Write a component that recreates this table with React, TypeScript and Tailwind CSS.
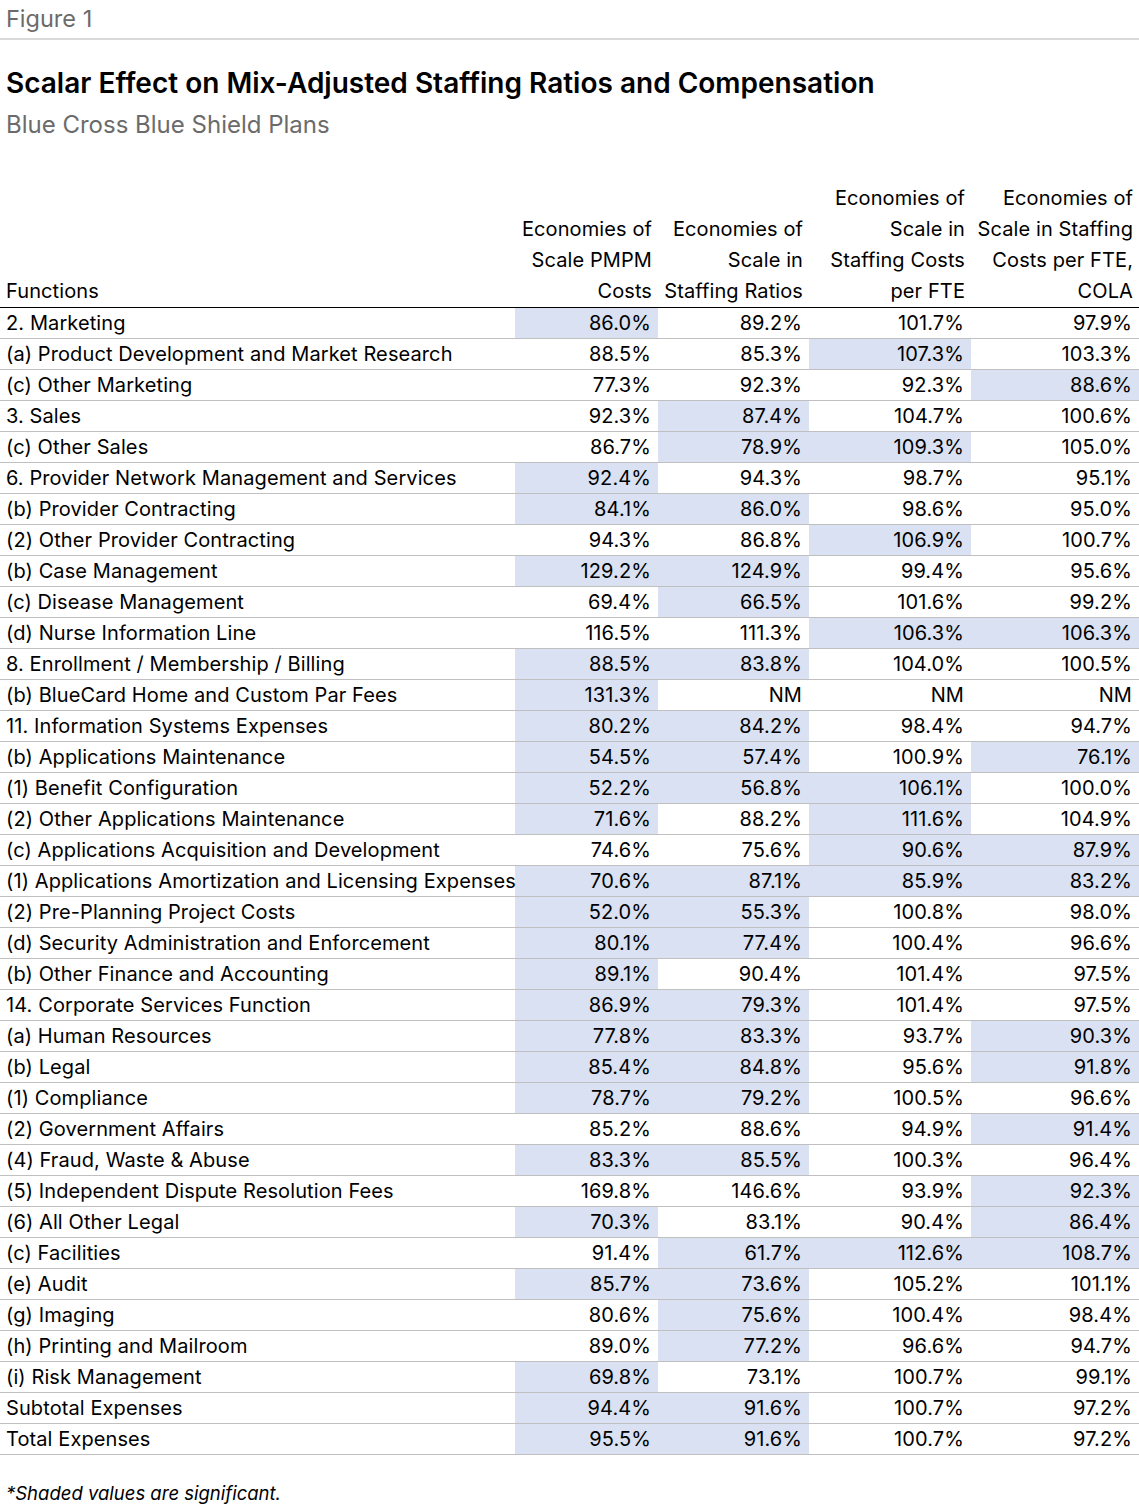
import React from 'react';

type Row = { label: string; values: string[]; shaded: boolean[] };

const r = (label: string, values: string[], shaded: number[]): Row => ({
  label,
  values,
  shaded: [0, 1, 2, 3].map((i) => shaded.includes(i)),
});

const rows: Row[] = [
  r('2. Marketing', ['86.0%', '89.2%', '101.7%', '97.9%'], [0]),
  r('(a) Product Development and Market Research', ['88.5%', '85.3%', '107.3%', '103.3%'], [2]),
  r('(c) Other Marketing', ['77.3%', '92.3%', '92.3%', '88.6%'], [3]),
  r('3. Sales', ['92.3%', '87.4%', '104.7%', '100.6%'], [1]),
  r('(c) Other Sales', ['86.7%', '78.9%', '109.3%', '105.0%'], [1, 2]),
  r('6. Provider Network Management and Services', ['92.4%', '94.3%', '98.7%', '95.1%'], [0]),
  r('(b) Provider Contracting', ['84.1%', '86.0%', '98.6%', '95.0%'], [0, 1]),
  r('(2) Other Provider Contracting', ['94.3%', '86.8%', '106.9%', '100.7%'], [2]),
  r('(b) Case Management', ['129.2%', '124.9%', '99.4%', '95.6%'], [0, 1]),
  r('(c) Disease Management', ['69.4%', '66.5%', '101.6%', '99.2%'], [1]),
  r('(d) Nurse Information Line', ['116.5%', '111.3%', '106.3%', '106.3%'], [2, 3]),
  r('8. Enrollment / Membership / Billing', ['88.5%', '83.8%', '104.0%', '100.5%'], [0, 1]),
  r('(b) BlueCard Home and Custom Par Fees', ['131.3%', 'NM', 'NM', 'NM'], [0]),
  r('11. Information Systems Expenses', ['80.2%', '84.2%', '98.4%', '94.7%'], [0, 1]),
  r('(b) Applications Maintenance', ['54.5%', '57.4%', '100.9%', '76.1%'], [0, 1, 3]),
  r('(1) Benefit Configuration', ['52.2%', '56.8%', '106.1%', '100.0%'], [0, 1, 2]),
  r('(2) Other Applications Maintenance', ['71.6%', '88.2%', '111.6%', '104.9%'], [0, 2]),
  r('(c) Applications Acquisition and Development', ['74.6%', '75.6%', '90.6%', '87.9%'], [2, 3]),
  r('(1) Applications Amortization and Licensing Expenses', ['70.6%', '87.1%', '85.9%', '83.2%'], [0, 1, 2, 3]),
  r('(2) Pre-Planning Project Costs', ['52.0%', '55.3%', '100.8%', '98.0%'], [0, 1]),
  r('(d) Security Administration and Enforcement', ['80.1%', '77.4%', '100.4%', '96.6%'], [0, 1]),
  r('(b) Other Finance and Accounting', ['89.1%', '90.4%', '101.4%', '97.5%'], [0]),
  r('14. Corporate Services Function', ['86.9%', '79.3%', '101.4%', '97.5%'], [0, 1]),
  r('(a) Human Resources', ['77.8%', '83.3%', '93.7%', '90.3%'], [0, 1, 3]),
  r('(b) Legal', ['85.4%', '84.8%', '95.6%', '91.8%'], [0, 1, 3]),
  r('(1) Compliance', ['78.7%', '79.2%', '100.5%', '96.6%'], [0, 1]),
  r('(2) Government Affairs', ['85.2%', '88.6%', '94.9%', '91.4%'], [3]),
  r('(4) Fraud, Waste & Abuse', ['83.3%', '85.5%', '100.3%', '96.4%'], [0, 1]),
  r('(5) Independent Dispute Resolution Fees', ['169.8%', '146.6%', '93.9%', '92.3%'], [3]),
  r('(6) All Other Legal', ['70.3%', '83.1%', '90.4%', '86.4%'], [0, 3]),
  r('(c) Facilities', ['91.4%', '61.7%', '112.6%', '108.7%'], [1, 2, 3]),
  r('(e) Audit', ['85.7%', '73.6%', '105.2%', '101.1%'], [0, 1]),
  r('(g) Imaging', ['80.6%', '75.6%', '100.4%', '98.4%'], [1]),
  r('(h) Printing and Mailroom', ['89.0%', '77.2%', '96.6%', '94.7%'], [1]),
  r('(i) Risk Management', ['69.8%', '73.1%', '100.7%', '99.1%'], [0]),
  r('Subtotal Expenses', ['94.4%', '91.6%', '100.7%', '97.2%'], [0, 1]),
  r('Total Expenses', ['95.5%', '91.6%', '100.7%', '97.2%'], [0, 1]),
];

const headers = [
  ['Economies of', 'Scale PMPM', 'Costs'],
  ['Economies of', 'Scale in', 'Staffing Ratios'],
  ['Economies of', 'Scale in', 'Staffing Costs', 'per FTE'],
  ['Economies of', 'Scale in Staffing', 'Costs per FTE,', 'COLA'],
];

export default function App() {
  return (
    <div className="w-[1139px] bg-white text-black font-['Inter','Liberation_Sans',sans-serif]">
      {/* Figure label */}
      <div className="h-[40px] border-b-2 border-[#d9d9d9] pl-[6px] text-[23.5px] leading-[38px] text-[#6b6b6b]">
        Figure 1
      </div>

      {/* Title block */}
      <div className="pl-[6px] pt-[26px]">
        <h1 className="text-[28px] leading-[34px] font-semibold">
          Scalar Effect on Mix-Adjusted Staffing Ratios and Compensation
        </h1>
        <p className="mt-[10px] text-[24px] leading-[30px] text-[#6b6b6b]">Blue Cross Blue Shield Plans</p>
      </div>

      {/* Table */}
      <table className="mt-[43px] w-[1139px] table-fixed border-collapse text-[20px] leading-[30px] tracking-[0.1px]">
        <colgroup>
          <col className="w-[515px]" />
          <col className="w-[143px]" />
          <col className="w-[151px]" />
          <col className="w-[162px]" />
          <col className="w-[168px]" />
        </colgroup>
        <thead>
          <tr className="border-b border-black">
            <th className="pl-[6px] text-left align-bottom font-normal leading-[31px]">Functions</th>
            {headers.map((lines, i) => (
              <th key={i} className="pr-[6px] text-right align-bottom font-normal leading-[31px] whitespace-nowrap">
                {lines.map((l, j) => (
                  <div key={j}>{l}</div>
                ))}
              </th>
            ))}
          </tr>
        </thead>
        <tbody>
          {rows.map((row) => (
            <tr key={row.label} className="border-b border-[#c0c0c0]">
              <td className="h-[31px] pl-[6px] whitespace-nowrap">{row.label}</td>
              {row.values.map((v, i) => (
                <td
                  key={i}
                  className={`h-[31px] pr-[7px] text-right ${row.shaded[i] ? 'bg-[#d9e1f2]' : ''}`}
                >
                  {v}
                </td>
              ))}
            </tr>
          ))}
        </tbody>
      </table>

      {/* Footnote */}
      <p className="pl-[6px] pt-[26px] pb-[4px] text-[18.5px] leading-[24px] italic">*Shaded values are significant.</p>
    </div>
  );
}
